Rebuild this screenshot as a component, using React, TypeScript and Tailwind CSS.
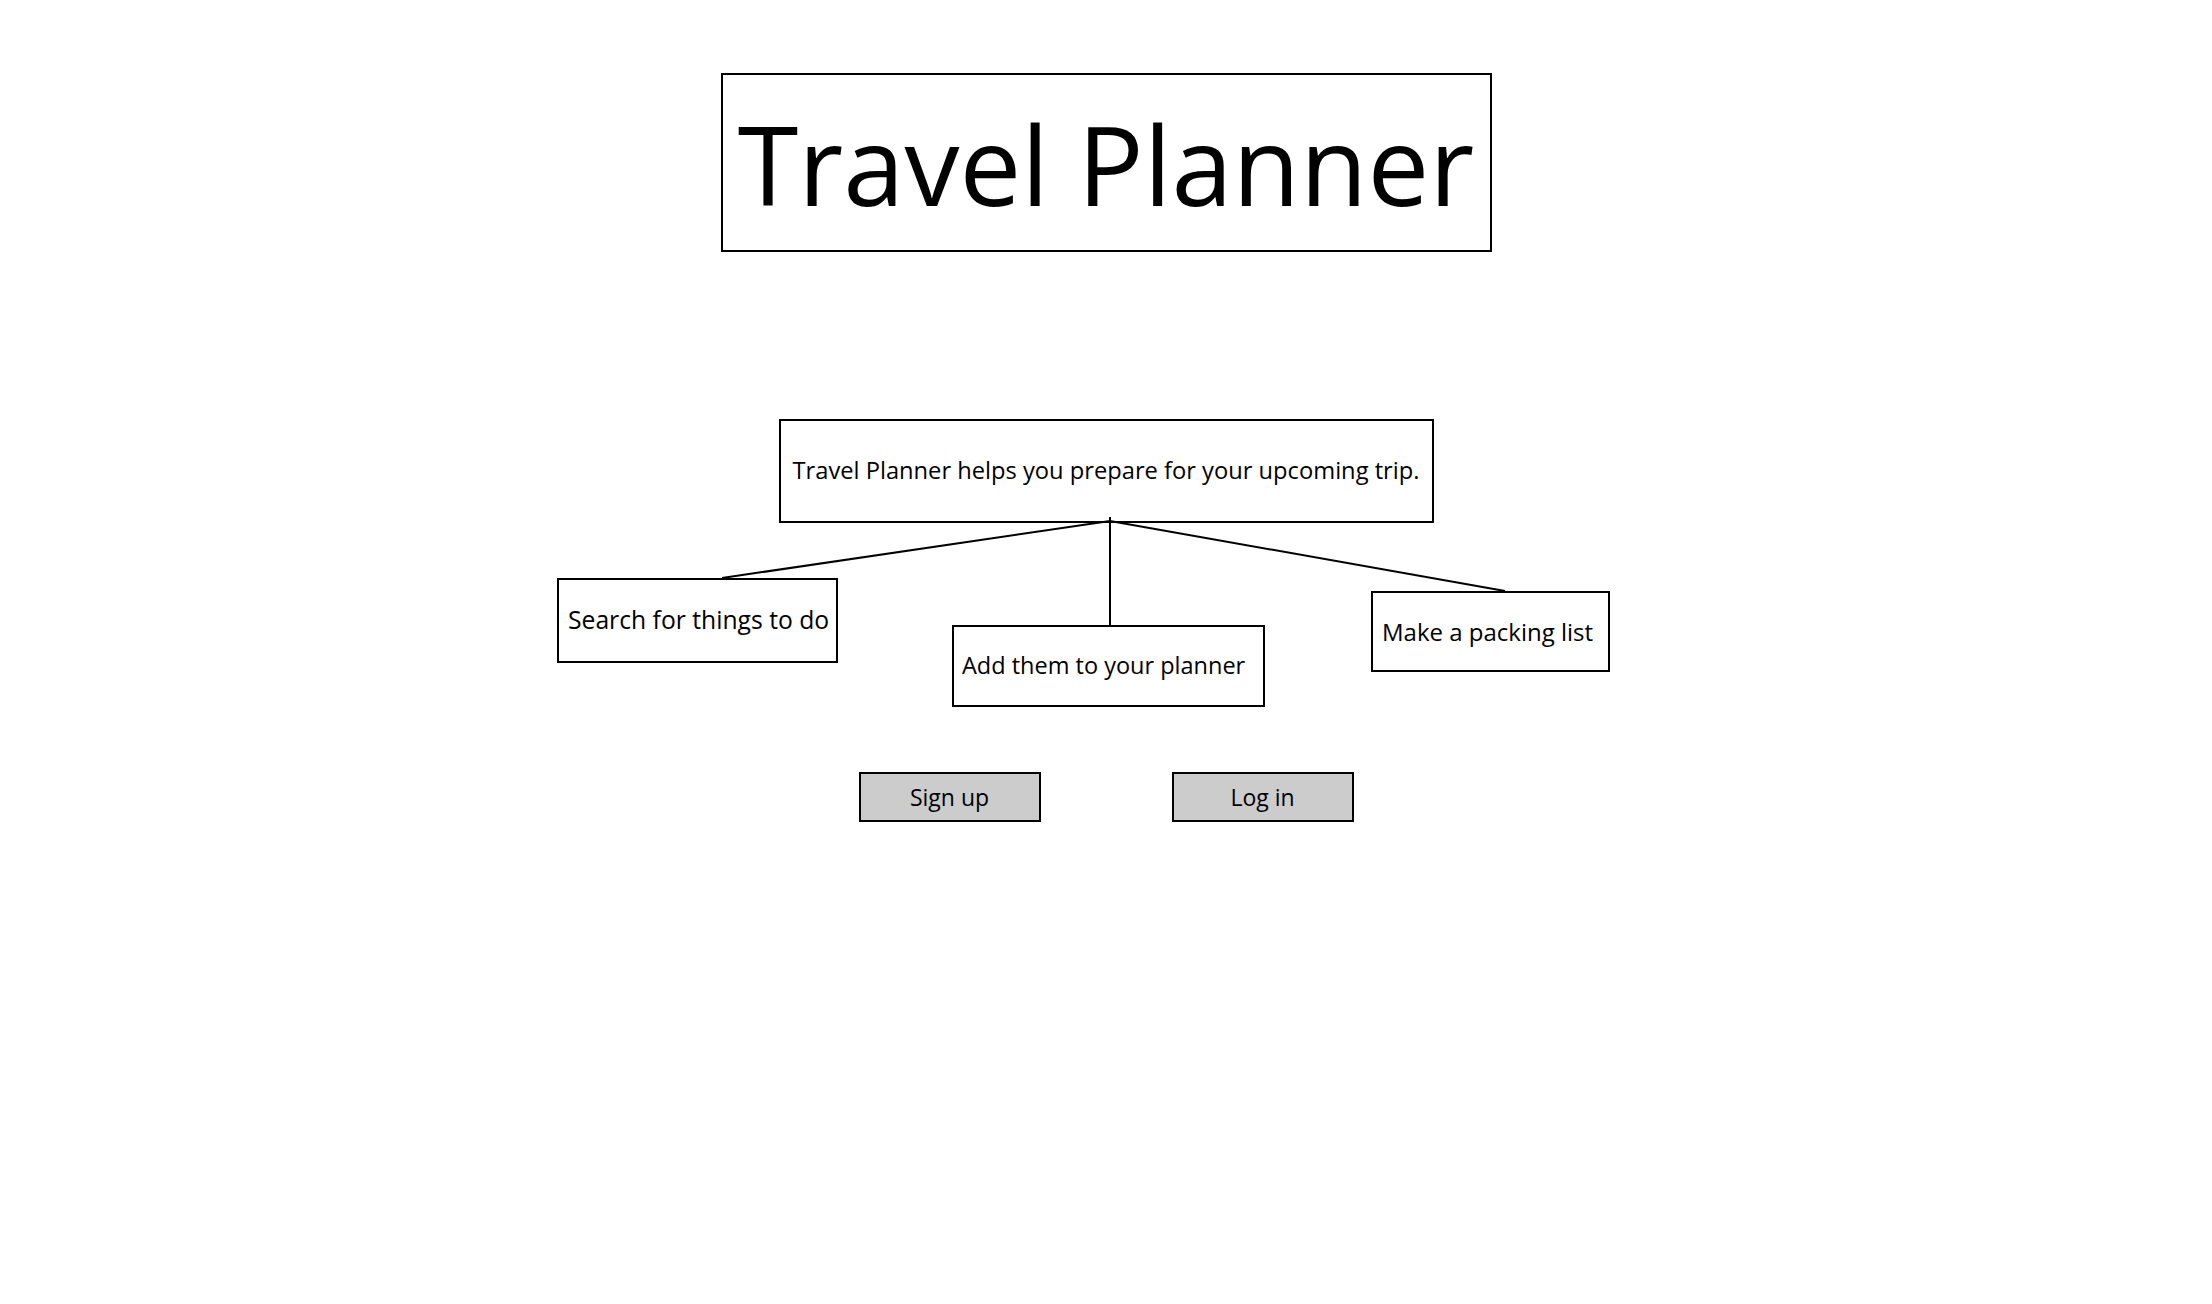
import React from "react";

export default function App() {
  return (
    <div className="relative w-full h-[1304px] bg-white text-black font-['Comic_Sans_MS','Open_Sans',sans-serif] flex flex-col items-center pt-[73px]">
      <div className="w-[771px] h-[179px] border-2 border-black flex items-center justify-center">
        <span className="text-[110px] leading-none">Travel Planner</span>
      </div>

      <div className="mt-[167px] w-[655px] h-[104px] border-2 border-black flex items-center justify-center">
        <span className="text-[23.7px] leading-none whitespace-nowrap">Travel Planner helps you prepare for your upcoming trip.</span>
      </div>

      <div className="mt-[55px] w-full flex items-start pl-[557px]">
        <div className="w-[281px] h-[85px] border-2 border-black flex items-center px-[9px]">
          <span className="text-[24.7px] leading-none whitespace-nowrap">Search for things to do</span>
        </div>
        <div className="ml-[114px] mt-[47px] w-[313px] h-[82px] border-2 border-black flex items-center px-[8px]">
          <span className="text-[23.5px] leading-none whitespace-nowrap">Add them to your planner</span>
        </div>
        <div className="ml-[106px] mt-[13px] w-[239px] h-[81px] border-2 border-black flex items-center px-[9px]">
          <span className="text-[24px] leading-none whitespace-nowrap">Make a packing list</span>
        </div>
      </div>

      <div className="mt-[65px] flex gap-[131px]">
        <button className="w-[182px] h-[50px] bg-[#cccccc] border-2 border-black flex items-center justify-center text-[23px] leading-none">
          Sign up
        </button>
        <button className="w-[182px] h-[50px] bg-[#cccccc] border-2 border-black flex items-center justify-center text-[23px] leading-none">
          Log in
        </button>
      </div>

      <svg className="absolute inset-0 w-full h-full pointer-events-none" viewBox="0 0 2212 1304">
        <line x1="1110" y1="521" x2="722" y2="578" stroke="black" strokeWidth="2" />
        <line x1="1110" y1="517" x2="1110" y2="625" stroke="black" strokeWidth="2" />
        <line x1="1110" y1="521" x2="1505" y2="591" stroke="black" strokeWidth="2" />
      </svg>
    </div>
  );
}
